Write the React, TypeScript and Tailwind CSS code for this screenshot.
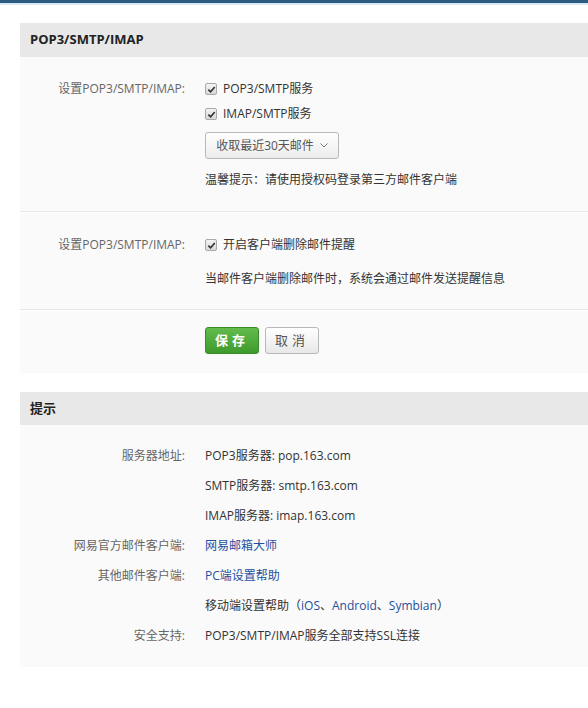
import React from 'react';

function Check() {
  return (
    <span className="inline-flex h-[12px] w-[12px] items-center justify-center rounded-[2px] border border-[#a9a9a9] bg-gradient-to-b from-[#f4f4f4] to-[#d8d8d8]">
      <svg viewBox="0 0 10 10" className="h-[9px] w-[9px]">
        <path d="M1.5 5.2 L4 7.6 L8.6 2.2" fill="none" stroke="#333" strokeWidth="1.8" />
      </svg>
    </span>
  );
}

function Label({ children }: { children: React.ReactNode }) {
  return <div className="w-[165px] shrink-0 text-right leading-6 text-[#666]">{children}</div>;
}

const infoRows: { label?: string; value: React.ReactNode }[] = [
  { label: '服务器地址:', value: 'POP3服务器: pop.163.com' },
  { value: 'SMTP服务器: smtp.163.com' },
  { value: 'IMAP服务器: imap.163.com' },
  { label: '网易官方邮件客户端:', value: <span className="text-[#1f4f9e]">网易邮箱大师</span> },
  { label: '其他邮件客户端:', value: <span className="text-[#1f4f9e]">PC端设置帮助</span> },
  {
    value: (
      <span>
        移动端设置帮助（<span className="text-[#1f4f9e]">iOS</span>、<span className="text-[#1f4f9e]">Android</span>、
        <span className="text-[#1f4f9e]">Symbian</span>）
      </span>
    ),
  },
  { label: '安全支持:', value: 'POP3/SMTP/IMAP服务全部支持SSL连接' },
];

export default function App() {
  return (
    <div
      className="h-[708px] w-[588px] overflow-hidden bg-white text-[12px] text-[#333]"
      style={{ fontFamily: '"Open Sans", "Noto Sans CJK SC", sans-serif' }}
    >
      <div className="h-[3px] bg-[#2b5b80]" />
      <div className="h-[2px] bg-[#dce9f4]" />

      <div className="ml-[20px] mt-[18px]">
        <div className="flex h-[34px] items-center bg-[#e8e8e8] pl-[10px] text-[13px] font-bold text-[#222]">
          POP3/SMTP/IMAP
        </div>
        <div className="bg-[#fafafa]">
          <div className="flex gap-[20px] pb-[19px] pt-[20px]">
            <Label>设置POP3/SMTP/IMAP:</Label>
            <div className="flex flex-col">
              <div className="flex h-[24px] items-center gap-[6px]">
                <Check />
                <span>POP3/SMTP服务</span>
              </div>
              <div className="mt-[1px] flex h-[24px] items-center gap-[6px]">
                <Check />
                <span>IMAP/SMTP服务</span>
              </div>
              <div className="mt-[6px] flex h-[27px] w-[134px] items-center justify-center gap-[6px] rounded-[3px] border border-[#b8b8b8] bg-gradient-to-b from-white to-[#ececec] text-[#555]">
                <span>收取最近30天邮件</span>
                <svg viewBox="0 0 8 5" className="h-[5px] w-[8px]">
                  <path d="M0.5 0.5 L4 4 L7.5 0.5" fill="none" stroke="#777" strokeWidth="1" />
                </svg>
              </div>
              <div className="mt-[9px] leading-6">温馨提示：请使用授权码登录第三方邮件客户端</div>
            </div>
          </div>
          <div className="h-[2px] border-t border-[#e6e6e6] bg-white" />

          <div className="flex gap-[20px] pb-[18px] pt-[20px]">
            <Label>设置POP3/SMTP/IMAP:</Label>
            <div className="flex flex-col">
              <div className="flex h-[24px] items-center gap-[6px]">
                <Check />
                <span>开启客户端删除邮件提醒</span>
              </div>
              <div className="mt-[10px] leading-6">当邮件客户端删除邮件时，系统会通过邮件发送提醒信息</div>
            </div>
          </div>
          <div className="h-[2px] border-t border-[#e6e6e6] bg-white" />

          <div className="flex gap-[6px] pb-[19px] pl-[185px] pt-[16px]">
            <button className="h-[27px] w-[54px] rounded-[3px] border border-[#3b8a29] bg-gradient-to-b from-[#62bb4c] to-[#3f9a2d] text-[13px] font-bold tracking-[4px] text-white">
              保存
            </button>
            <button className="h-[27px] w-[54px] rounded-[3px] border border-[#b8b8b8] bg-gradient-to-b from-white to-[#e8e8e8] text-[13px] tracking-[4px] text-[#555]">
              取消
            </button>
          </div>
        </div>
      </div>

      <div className="ml-[20px] mt-[19px]">
        <div className="flex h-[33px] items-center bg-[#e8e8e8] pl-[10px] text-[13px] font-bold text-[#222]">
          提示
        </div>
        <div className="bg-[#fafafa] pb-[16px] pt-[16px]">
          {infoRows.map((r, i) => (
            <div key={i} className="flex h-[30px] items-center gap-[20px]">
              <Label>{r.label ?? ''}</Label>
              <div className="leading-6">{r.value}</div>
            </div>
          ))}
        </div>
      </div>
    </div>
  );
}
